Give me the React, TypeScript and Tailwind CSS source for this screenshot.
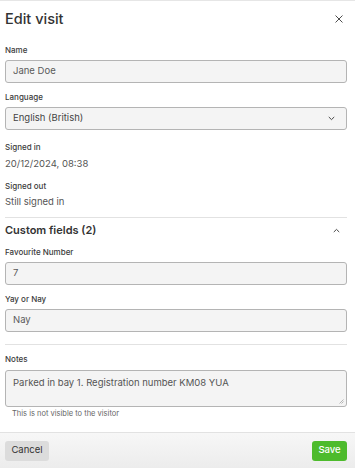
import React from 'react';

const font = { fontFamily: 'Inter, "Noto Sans", sans-serif' };

const Label: React.FC<{ children: React.ReactNode }> = ({ children }) => (
  <div className="text-[8px] leading-[12px] font-medium text-[#3b3b3b] mb-[4px]">{children}</div>
);

const Field: React.FC<{ value: string }> = ({ value }) => (
  <div className="h-[23px] flex items-center px-[7px] rounded-[3px] border border-[#b4b4b4] bg-[#f4f4f4] text-[9.5px] text-[#5a5a5a]">
    {value}
  </div>
);

export default function App() {
  return (
    <div className="w-[355px] h-[468px] bg-white flex flex-col border-t border-[#e6e6e6] overflow-hidden" style={font}>
      <div className="flex-1 pl-[5px] pr-[8px]">
        <div className="h-[35px] flex items-center justify-between">
          <h2 className="text-[14.5px] font-medium text-[#333]">Edit visit</h2>
          <svg width="8" height="8" viewBox="0 0 10 10" className="mr-[4px]">
            <path d="M1 1L9 9M9 1L1 9" stroke="#444" strokeWidth="1.2" strokeLinecap="round" />
          </svg>
        </div>

        <div className="mt-[8px]">
          <Label>Name</Label>
          <Field value="Jane Doe" />
        </div>

        <div className="mt-[8px]">
          <Label>Language</Label>
          <div className="h-[23px] flex items-center justify-between px-[7px] rounded-[3px] border border-[#b4b4b4] bg-[#f4f4f4] text-[9.5px] text-[#444]">
            <span>English (British)</span>
            <svg width="7" height="5" viewBox="0 0 10 6" className="mr-[4px]">
              <path d="M1.5 1.2L5 4.6L8.5 1.2" stroke="#444" strokeWidth="1.4" fill="none" strokeLinecap="round" />
            </svg>
          </div>
        </div>

        <div className="mt-[11px]">
          <div className="text-[8px] leading-[12px] font-medium text-[#3b3b3b]">Signed in</div>
          <div className="mt-[4px] text-[9.5px] leading-[14px] text-[#555]">20/12/2024, 08:38</div>
        </div>

        <div className="mt-[9px]">
          <div className="text-[8px] leading-[12px] font-medium text-[#3b3b3b]">Signed out</div>
          <div className="mt-[3px] text-[9.5px] leading-[14px] text-[#555]">Still signed in</div>
        </div>

        <div className="mt-[8px] border-t border-[#e2e2e2]" />

        <div className="mt-[4px] h-[16px] flex items-center justify-between">
          <span className="text-[11px] font-semibold text-[#333]">Custom fields (2)</span>
          <svg width="7" height="5" viewBox="0 0 10 6" className="mr-[7px]">
            <path d="M1.5 4.8L5 1.4L8.5 4.8" stroke="#444" strokeWidth="1.4" fill="none" strokeLinecap="round" />
          </svg>
        </div>

        <div className="mt-[8px]">
          <Label>Favourite Number</Label>
          <Field value="7" />
        </div>

        <div className="mt-[8px]">
          <Label>Yay or Nay</Label>
          <Field value="Nay" />
        </div>

        <div className="mt-[12px] border-t border-[#e2e2e2]" />

        <div className="mt-[8px]">
          <div className="text-[8px] leading-[12px] font-medium text-[#3b3b3b] mb-[5px]">Notes</div>
          <div className="relative h-[37px] px-[7px] pt-[5px] rounded-[3px] border border-[#b4b4b4] bg-[#f4f4f4] text-[9.5px] leading-[14px] text-[#555]">
            Parked in bay 1. Registration number KM08 YUA
            <svg width="5" height="5" viewBox="0 0 5 5" className="absolute right-[2px] bottom-[2px]">
              <path d="M4.5 0.5L0.5 4.5M4.5 2.5L2.5 4.5" stroke="#999" strokeWidth="0.7" />
            </svg>
          </div>
          <div className="mt-[1px] pl-[7px] text-[7.5px] leading-[12px] text-[#666]">This is not visible to the visitor</div>
        </div>
      </div>

      <div className="h-[36px] border-t border-[#e2e2e2] bg-gradient-to-b from-[#f7f7f7] to-[#ececec] flex items-center justify-between pl-[5px] pr-[8px]">
        <button className="h-[20px] w-[44px] rounded-[3px] bg-[#dcdcdc] text-[9.5px] text-[#333]">Cancel</button>
        <button className="h-[20px] w-[35px] rounded-[3px] bg-[#4dbb2c] text-[9.5px] font-medium text-white">Save</button>
      </div>
    </div>
  );
}
